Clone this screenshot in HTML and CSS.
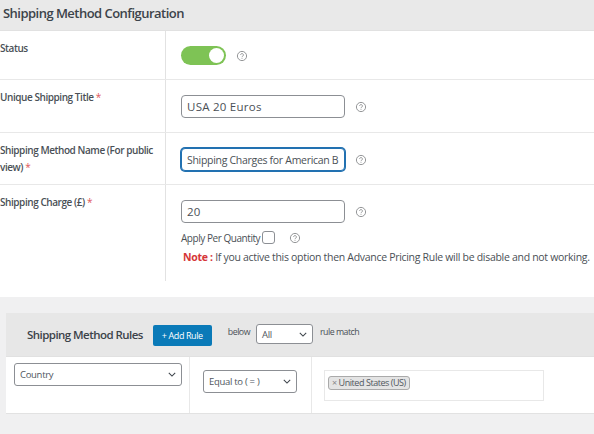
FILE: index.html
```html
<!DOCTYPE html>
<html lang="en">
<head>
<meta charset="utf-8">
<title>Shipping Method Configuration</title>
<link rel="stylesheet" href="styles.css">
</head>
<body>
<section class="config">
  <h2 class="config-title">Shipping Method Configuration</h2>
  <div class="row row-status">
    <div class="label">Status</div>
    <div class="field">
      <div class="inline">
        <span class="toggle"><span class="knob"></span></span>
        <svg class="help" viewBox="0 0 12 12"><circle cx="6" cy="6" r="4.6"/><path d="M4.6 4.9a1.4 1.4 0 1 1 2.2 1.2c-.5.3-.8.6-.8 1.1"/><path d="M6 8.2v.7"/></svg>
      </div>
    </div>
  </div>
  <div class="row row-title">
    <div class="label">Unique Shipping Title <span class="req">*</span></div>
    <div class="field">
      <div class="inline">
        <input class="text short" type="text" value="USA 20 Euros">
        <svg class="help" viewBox="0 0 12 12"><circle cx="6" cy="6" r="4.6"/><path d="M4.6 4.9a1.4 1.4 0 1 1 2.2 1.2c-.5.3-.8.6-.8 1.1"/><path d="M6 8.2v.7"/></svg>
      </div>
    </div>
  </div>
  <div class="row row-name">
    <div class="label">Shipping Method Name (For public view) <span class="req">*</span></div>
    <div class="field">
      <div class="inline">
        <input class="text focused" type="text" value="Shipping Charges for American B">
        <svg class="help" viewBox="0 0 12 12"><circle cx="6" cy="6" r="4.6"/><path d="M4.6 4.9a1.4 1.4 0 1 1 2.2 1.2c-.5.3-.8.6-.8 1.1"/><path d="M6 8.2v.7"/></svg>
      </div>
    </div>
  </div>
  <div class="row row-charge">
    <div class="label">Shipping Charge (£) <span class="req">*</span></div>
    <div class="field">
      <div class="inline">
        <input class="text short" type="text" value="20">
        <svg class="help" viewBox="0 0 12 12"><circle cx="6" cy="6" r="4.6"/><path d="M4.6 4.9a1.4 1.4 0 1 1 2.2 1.2c-.5.3-.8.6-.8 1.1"/><path d="M6 8.2v.7"/></svg>
      </div>
      <div class="qty">
        <span>Apply Per Quantity</span><span class="check"></span>
        <svg class="help" viewBox="0 0 12 12"><circle cx="6" cy="6" r="4.6"/><path d="M4.6 4.9a1.4 1.4 0 1 1 2.2 1.2c-.5.3-.8.6-.8 1.1"/><path d="M6 8.2v.7"/></svg>
      </div>
      <p class="note"><b>Note :</b> If you active this option then Advance Pricing Rule will be disable and not working.</p>
    </div>
  </div>
</section>
<section class="rules">
  <div class="rules-head">
    <h3 class="rules-title">Shipping Method Rules</h3>
    <span class="add">+ Add Rule</span>
    <span class="small">below</span>
    <span class="select select-all">All<svg class="chev" viewBox="0 0 10 6"><path d="M1 1l4 4 4-4"/></svg></span>
    <span class="small">rule match</span>
  </div>
  <div class="rules-body">
    <div class="cell cell-type">
      <span class="select select-country">Country<svg class="chev" viewBox="0 0 10 6"><path d="M1 1l4 4 4-4"/></svg></span>
    </div>
    <div class="cell cell-op">
      <span class="select select-op">Equal to ( = )<svg class="chev" viewBox="0 0 10 6"><path d="M1 1l4 4 4-4"/></svg></span>
    </div>
    <div class="cell cell-val">
      <div class="multi"><span class="tag"><span class="x">×</span> United States (US)</span></div>
    </div>
  </div>
</section>
</body>
</html>
```
FILE: styles.css
```css
* { box-sizing: border-box; }
html, body { margin: 0; padding: 0; }
body {
  width: 594px;
  height: 434px;
  overflow: hidden;
  background: #f0f0f1;
  font-family: "Open Sans", "Liberation Sans", sans-serif;
  font-size: 10.5px;
  color: #4a5056;
}
.config { background: #fff; height: 297px; }
.config-title {
  margin: 0;
  height: 31px;
  padding: 4px 0 0 3px;
  background: #e9e9e9;
  border-bottom: 1px solid #e1e1e1;
  font-size: 13px;
  line-height: 18px;
  letter-spacing: -.53px;
  font-weight: 600;
  color: #3c434a;
}
.row { display: grid; grid-template-columns: 166px 1fr; border-bottom: 1px solid #e8e8e8; }
.row-status { height: 49px; }
.row-title { height: 53px; }
.row-name { height: 52px; }
.row-charge { height: 96px; border-bottom: 0; }
.label {
  padding: 9px 6px 0 0;
  border-right: 1px solid #e2e2e2;
  font-size: 10px;
  font-weight: 600;
  letter-spacing: -.44px;
  line-height: 17px;
  color: #4a5056;
}
.req { color: #e0565a; font-weight: 400; }
.field { padding: 15px 0 0 15px; min-width: 0; }
.inline { display: flex; align-items: center; gap: 10px; }
.toggle {
  display: flex;
  justify-content: flex-end;
  align-items: center;
  width: 45px;
  height: 19px;
  padding: 2px;
  border-radius: 10px;
  background: #7ec355;
}
.knob { width: 15px; height: 15px; border-radius: 50%; background: #fff; }
.help { width: 12px; height: 12px; flex: none; fill: none; stroke: #959799; stroke-width: 1; }
.text {
  width: 164px;
  height: 23px;
  padding: 0 5px;
  border: 1px solid #8c8f94;
  border-radius: 4px;
  background: #fff;
  font: 10.5px "Open Sans", sans-serif;
  letter-spacing: -.3px;
  color: #4a5056;
  outline: 0;
}
.short { font-size: 11.5px; letter-spacing: .25px; }
.focused { border-color: #2271b1; box-shadow: 0 0 0 1px #2271b1; }
.qty { display: flex; align-items: center; margin-top: 7px; height: 15px; font-size: 10px; letter-spacing: -.45px; }
.check { width: 13px; height: 13px; margin-left: 2px; border: 1px solid #8c8f94; border-radius: 3px; background: #fff; }
.qty .help { margin-left: 14px; }
.note { margin: 5px 0 0 2px; white-space: nowrap; font-size: 10.5px; letter-spacing: -.3px; line-height: 15px; }
.note b { color: #d63638; font-weight: 700; }
.rules { margin: 16px 0 0 6px; background: #fff; border-bottom: 1px solid #e2e2e2; height: 101px; }
.rules-head {
  display: flex;
  align-items: flex-start;
  height: 44px;
  padding: 12px 0 0 21px;
  background: #e7e7e7;
  border-bottom: 1px solid #e1e1e1;
}
.rules-title { margin: 1px 10px 0 0; font-size: 11.5px; line-height: 17px; letter-spacing: -.55px; font-weight: 600; color: #3c434a; }
.add {
  width: 59px;
  height: 21px;
  background: #0a7ab8;
  border-radius: 2px;
  color: #fff;
  font-size: 9px;
  letter-spacing: -.4px;
  line-height: 21px;
  text-align: center;
}
.small { font-size: 8.8px; letter-spacing: -.5px; line-height: 16px; margin-top: -1px; }
.add + .small { margin-left: 16px; }
.select {
  display: flex;
  align-items: center;
  justify-content: space-between;
  height: 20px;
  padding: 0 5px;
  border: 1px solid #8c8f94;
  border-radius: 3px;
  background: #fff;
  font-size: 9.5px;
  letter-spacing: -.3px;
  color: #50575e;
}
.select-all { width: 57px; height: 20px; margin: -1px 7px 0 6px; }
.chev { width: 8px; height: 5px; fill: none; stroke: #3c434a; stroke-width: 1.3; }
.rules-body { display: grid; grid-template-columns: 184px 122px 1fr; height: 56px; }
.cell { border-right: 1px solid #e8e8e8; }
.cell-val { border-right: 0; }
.cell-type { padding: 6px 7px 0 8px; }
.cell-op { padding: 13px 13px 0 13px; }
.cell-val { padding: 13px 0 0 12px; }
.select-country { width: 168px; height: 23px; }
.select-op { height: 23px; width: 94px; }
.multi { width: 220px; height: 31px; padding: 4px 3px; border: 1px solid #e8e8e8; background: #fff; }
.tag {
  display: inline-block;
  height: 14px;
  padding: 0 3px;
  border: 1px solid #aaa;
  border-radius: 3px;
  background: #e4e4e4;
  font-size: 9px;
  letter-spacing: -.45px;
  line-height: 12px;
  color: #50575e;
}
.x { color: #888; }
```
